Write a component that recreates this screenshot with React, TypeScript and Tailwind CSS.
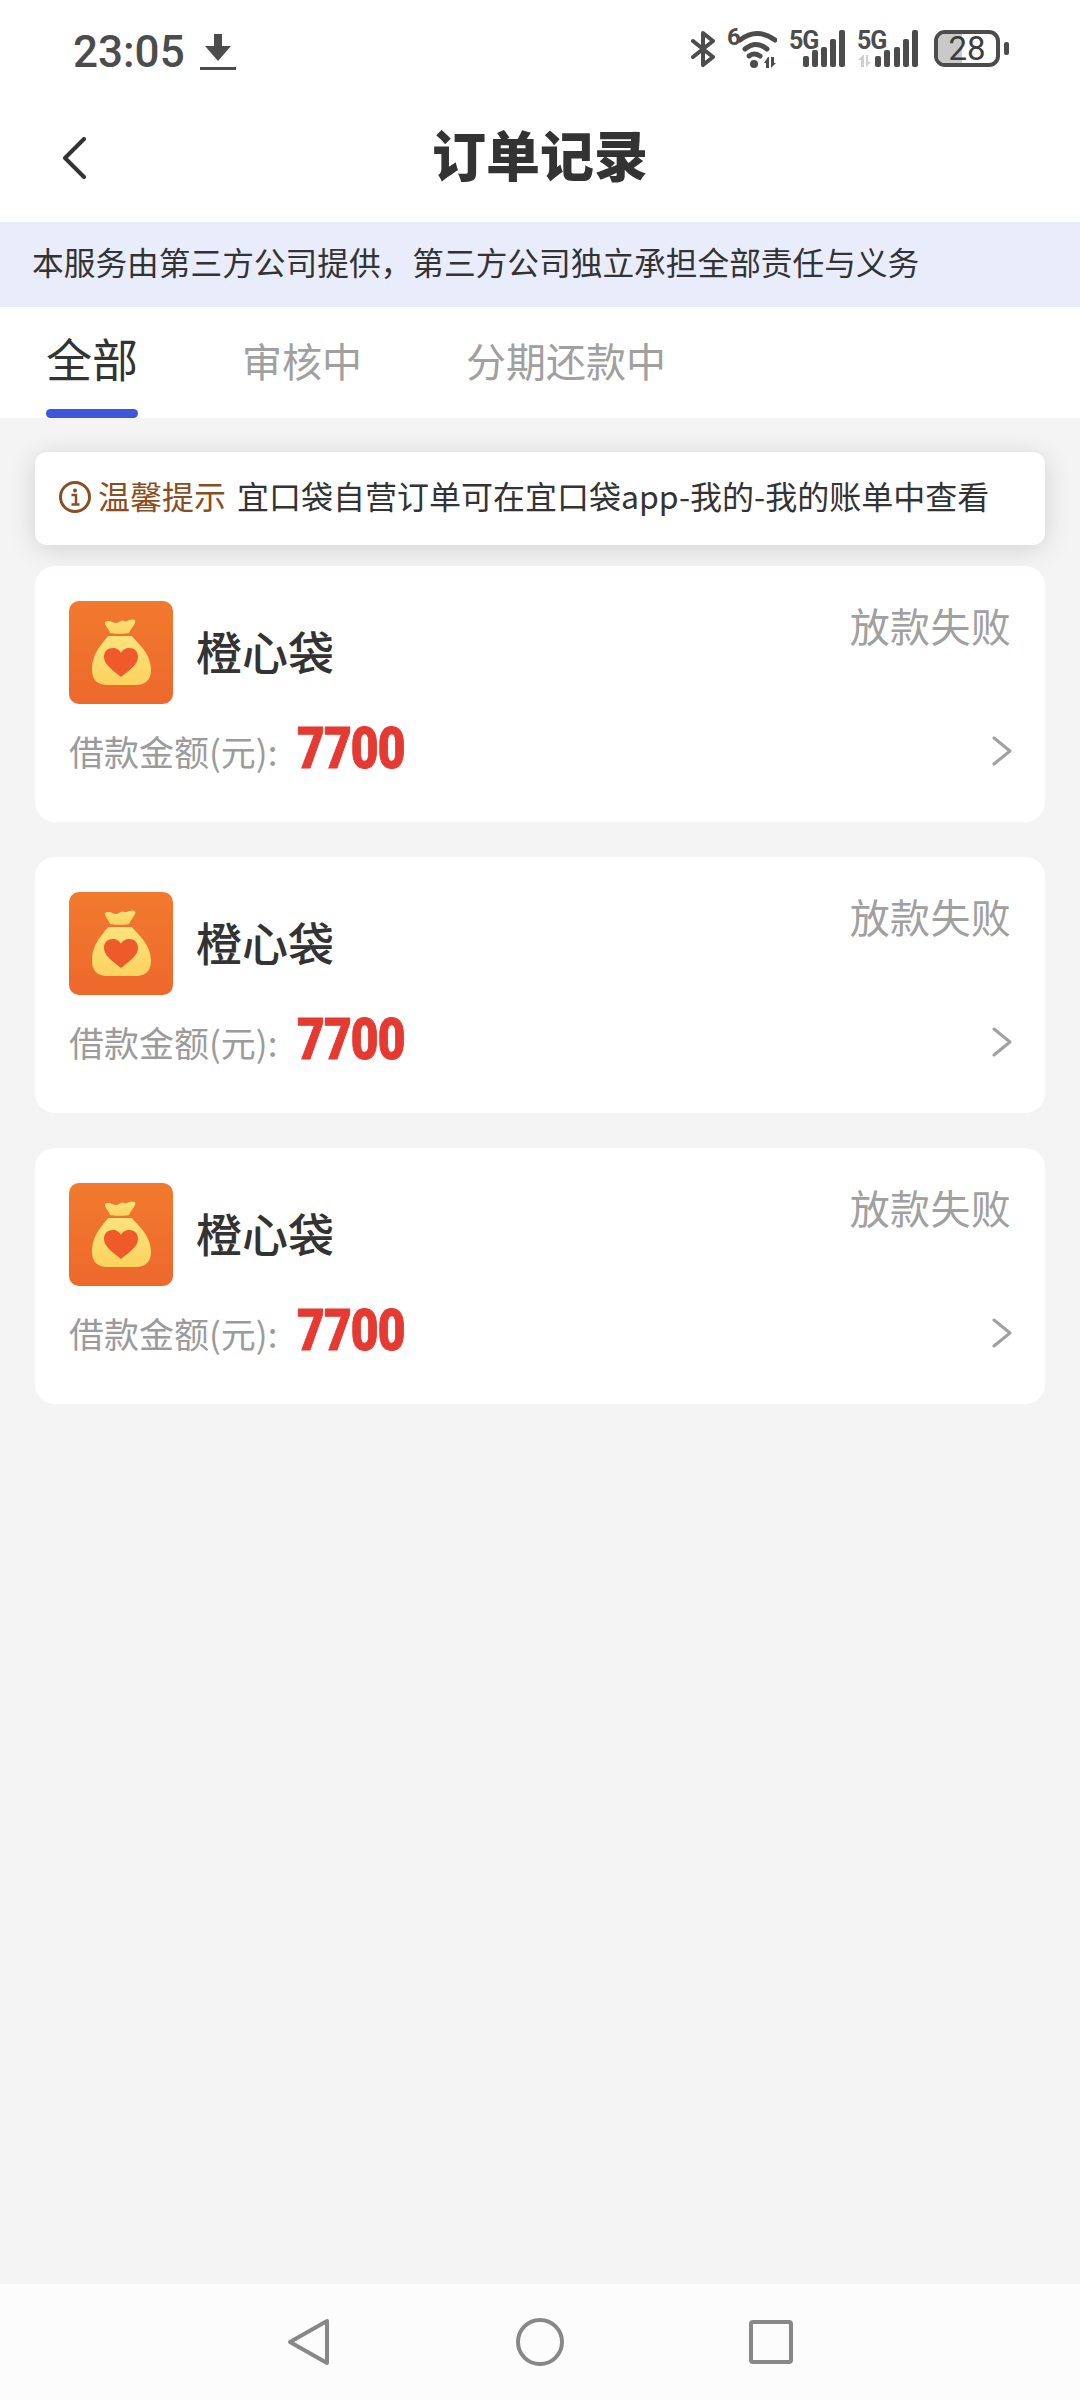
const CJK = "font-['Noto_Sans_CJK_SC','Noto_Sans',sans-serif]";

function Signal({ faded }: { faded?: boolean }) {
  return (
    <div className={faded ? "relative w-[61px] h-[37px]" : "relative w-[58px] h-[37px]"}>
      <span className="absolute left-0 top-[1px] font-['Roboto',sans-serif] font-bold text-[25px] leading-[19px] tracking-[-1px] text-[#4c4c4c]">
        5G
      </span>
      <svg width="61" height="37" viewBox="0 0 61 37" fill="#4c4c4c" className="absolute left-0 top-0">
        {faded ? (
          <g fill="#cfcfcf">
            <path d="M6 25l-5 5h3v7h3V25zM9 25v12l5-5h-3v-7z" />
          </g>
        ) : null}
        <rect x={faded ? 18 : 14} y="26" width="6" height="11" rx="2" />
        <rect x={faded ? 27 : 23} y="20" width="6" height="17" rx="2" />
        <rect x={faded ? 37 : 32} y="17" width="6" height="20" rx="2" />
        <rect x={faded ? 46 : 41} y="9" width="6" height="28" rx="2" />
        <rect x={faded ? 55 : 50} y="0" width="6" height="37" rx="2" />
      </svg>
    </div>
  );
}

function StatusBar() {
  return (
    <div className="h-[106px] flex items-start justify-between pl-[73px] pr-[71px] pt-[27px]">
      <div className="flex items-center gap-[15px]">
        <span className="font-['Roboto',sans-serif] font-medium text-[44px] leading-[50px] text-[#4c4c4c]">23:05</span>
        <svg width="36" height="36" viewBox="0 0 36 36" fill="#4c4c4c">
          <path d="M14 0h8v12h9L18 27 5 12h9z" />
          <rect x="0" y="33" width="36" height="3" />
        </svg>
      </div>
      <div className="flex items-center pt-[2px]">
        <svg width="24" height="36" viewBox="0 0 24 36" fill="none" stroke="#4c4c4c" strokeWidth="4" strokeLinejoin="round" strokeLinecap="round" className="mr-[12px]">
          <path d="M2 10l20 16-10 8V2l10 8L2 26" />
        </svg>
        <div className="relative w-[50px] h-[39px] mr-[12px]">
          <span className="absolute left-0 top-[-3px] font-['Roboto',sans-serif] font-bold text-[24px] leading-[22px] text-[#4c4c4c]">6</span>
          <svg width="50" height="39" viewBox="0 0 50 39" fill="none" stroke="#4c4c4c" strokeWidth="5" strokeLinecap="round" className="absolute left-0 top-0">
            <path d="M13 11Q30 -2 48 11" />
            <path d="M18 20Q29 11 40 20" />
            <path d="M22 27Q27 23 33 27" />
            <circle cx="27" cy="35" r="4" fill="#4c4c4c" stroke="none" />
            <path d="M41 28l-4 6h2v5h3V28zM44 28v11l5-5h-2v-6z" fill="#4c4c4c" stroke="none" />
          </svg>
        </div>
        <div className="mr-[10px]">
          <Signal />
        </div>
        <div className="mr-[16px]">
          <Signal faded />
        </div>
        <div className="flex items-center gap-[4px]">
          <div className="relative w-[66px] h-[37px] rounded-[11px] border-[4px] border-[#4c4c4c] flex items-center justify-center">
            <div className="absolute left-0 top-0 bottom-0 w-[24px] rounded-l-[7px] bg-[#c9c9c9]" />
            <span className="relative font-['Roboto',sans-serif] font-normal text-[33px] leading-[29px] text-[#3c3c3c]">28</span>
          </div>
          <div className="w-[5px] h-[13px] rounded-[2px] bg-[#4c4c4c]" />
        </div>
      </div>
    </div>
  );
}

function BagIcon() {
  return (
    <svg width="104" height="103" viewBox="0 0 104 103" className="shrink-0">
      <defs>
        <linearGradient id="bagBg" x1="0" y1="0" x2="0" y2="1">
          <stop offset="0" stopColor="#f17a2e" />
          <stop offset="1" stopColor="#ee682c" />
        </linearGradient>
        <linearGradient id="bagBody" x1="0" y1="0" x2="0" y2="1">
          <stop offset="0" stopColor="#fde27c" />
          <stop offset="1" stopColor="#fbd35f" />
        </linearGradient>
      </defs>
      <rect width="104" height="103" rx="10" fill="url(#bagBg)" />
      <path d="M36 21c4-3 8 1 11 1 3 0 5-4 8-2 3 1 7-3 11-1 2 3-4 8-6 13-2 1-17 1-19 0-1-4-6-8-5-11z" fill="url(#bagBody)" />
      <path d="M39 35h24c4 6 19 16 19 34 0 10-6 15-15 15H38c-9 0-15-5-15-15 0-18 12-28 16-34z" fill="url(#bagBody)" />
      <path d="M52 76C45 70 35 64 35 56c0-6 4-9 9-9 3 0 7 2 8 5 1-3 5-5 8-5 5 0 9 3 9 9 0 8-10 14-17 20z" fill="#ee5a29" />
    </svg>
  );
}

function OrderCard() {
  return (
    <div className="h-[256px] rounded-[20px] bg-white pl-[34px] pr-[34px] pt-[35px] flex flex-col">
      <div className="flex items-start justify-between">
        <div className="flex items-center gap-[23px]">
          <BagIcon />
          <span className="text-[46px] leading-[60px] text-[#333] font-medium pb-[6px]">橙心袋</span>
        </div>
        <span className="text-[40px] leading-[54px] text-[#a0a0a0] -mt-[3px] tracking-[0.3px]">放款失败</span>
      </div>
      <div className="flex items-center justify-between mt-[17px]">
        <div className="flex items-center">
          <span className="text-[35px] leading-[60px] text-[#9b9b9b] w-[228px]">借款金额(元):</span>
          <span className="font-['Roboto',sans-serif] font-black text-[57px] leading-[60px] text-[#e43a32] tracking-[-1px] scale-x-[0.84] origin-left -mt-[5px] [-webkit-text-stroke:1px_#e43a32]">
            7700
          </span>
        </div>
        <svg width="20" height="30" viewBox="0 0 20 30" fill="none" stroke="#a0a0a0" strokeWidth="3" strokeLinecap="round" strokeLinejoin="round" className="-mr-[1px]">
          <path d="M2 2l16 13L2 28" />
        </svg>
      </div>
    </div>
  );
}

export default function App() {
  return (
    <div className={`w-[1080px] h-[2400px] flex flex-col bg-[#f4f4f4] ${CJK}`}>
      {/* Status bar + title */}
      <div className="bg-white">
        <StatusBar />
        <div className="relative h-[116px] flex items-center justify-center pb-[20px]">
          <svg width="24" height="42" viewBox="0 0 24 42" fill="none" stroke="#333" strokeWidth="4" strokeLinecap="round" strokeLinejoin="round" className="absolute left-[62px] top-[31px]">
            <path d="M22 2L3 21l19 19" />
          </svg>
          <h1 className="text-[54px] leading-[70px] font-black text-[#333]">订单记录</h1>
        </div>
      </div>

      {/* Banner */}
      <div className="h-[85px] bg-[#e9edfb] flex items-center pl-[32px] pb-[5px] text-[31.7px] text-[#333]">
        本服务由第三方公司提供，第三方公司独立承担全部责任与义务
      </div>

      {/* Tabs */}
      <div className="h-[111px] bg-white flex items-start pl-[46px]">
        <div className="relative h-full w-[92px]">
          <span className="block text-[46px] leading-[60px] pt-[20px] text-[#333]">全部</span>
          <div className="absolute left-0 right-0 bottom-0 h-[9px] rounded-full bg-[#3f56d9]" />
        </div>
        <span className="ml-[104px] text-[40px] leading-[54px] pt-[26px] text-[#a0a0a0]">审核中</span>
        <span className="ml-[104px] text-[40px] leading-[54px] pt-[26px] text-[#a0a0a0]">分期还款中</span>
      </div>

      {/* List */}
      <div className="flex-1 px-[35px] pt-[34px] flex flex-col">
        <div className="relative z-10 h-[93px] rounded-[12px] bg-white shadow-[0_4px_28px_rgba(0,0,0,0.14)] flex items-center pl-[24px] pb-[7px]">
          <svg width="32" height="32" viewBox="0 0 32 32" fill="none" stroke="#8a4e22" strokeWidth="3" className="shrink-0 mr-[7px] mt-[4px]">
            <circle cx="16" cy="16" r="14.5" />
            <circle cx="16" cy="9.5" r="2" fill="#8a4e22" stroke="none" />
            <path d="M12.5 14H17v9M12.5 23.5h8" strokeWidth="2.5" />
          </svg>
          <span className="text-[32px] text-[#8a4e22] mr-[11px]">温馨提示</span>
          <span className="text-[32px] text-[#333]">宜口袋自营订单可在宜口袋app-我的-我的账单中查看</span>
        </div>
        <div className="mt-[21px] flex flex-col gap-[35px]">
          <OrderCard />
          <OrderCard />
          <OrderCard />
        </div>
      </div>

      {/* Bottom nav */}
      <div className="h-[116px] bg-[#fcfcfc] flex items-start justify-center pt-[34px]">
        <div className="flex items-center justify-center gap-[185px]">
          <svg width="44" height="48" viewBox="0 0 44 48" fill="none" stroke="#888" strokeWidth="4" strokeLinejoin="round">
            <path d="M40 3v42L3 24z" />
          </svg>
          <svg width="48" height="48" viewBox="0 0 48 48" fill="none" stroke="#888" strokeWidth="4">
            <circle cx="24" cy="24" r="22" />
          </svg>
          <svg width="44" height="44" viewBox="0 0 44 44" fill="none" stroke="#888" strokeWidth="4" strokeLinejoin="round">
            <rect x="2" y="2" width="40" height="40" rx="2" />
          </svg>
        </div>
      </div>
    </div>
  );
}
